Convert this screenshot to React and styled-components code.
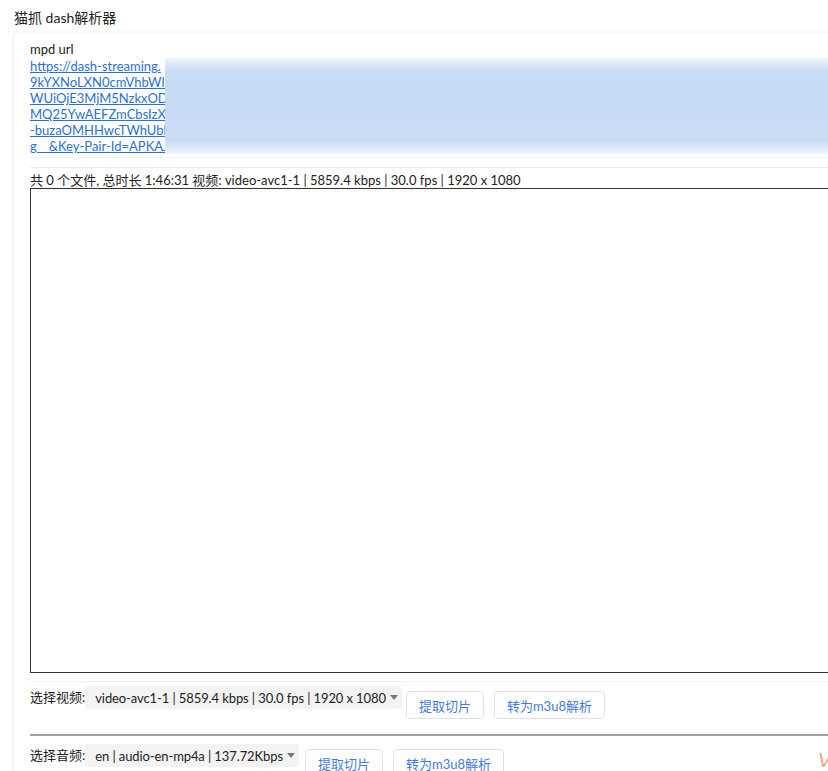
import React from "react";
import styled, { createGlobalStyle } from "styled-components";

const FONT = `"Lato", "Noto Sans CJK SC", sans-serif`;

const Global = createGlobalStyle`
  html, body { margin: 0; padding: 0; background: #fff; overflow: hidden; }
  body {
    font-family: ${FONT};
    font-size: 13px;
    color: #222;
  }
`;

const Page = styled.div`
  width: 900px;
  padding: 8px 0 0 14px;
`;

const Title = styled.div`
  font-size: 14px;
  line-height: 20px;
  color: #222;
  margin-bottom: 5px;
`;

const Card = styled.div`
  border-radius: 4px;
  box-shadow: 0 0 3px rgba(0, 0, 0, 0.14);
  padding: 8px 16px 0 16px;
  width: 826px;
`;

const Label = styled.div`
  line-height: 17px;
`;

const UrlBox = styled.div`
  display: flex;
  align-items: stretch;
  padding-bottom: 3px;
  border-bottom: 1px solid #f2f2f2;
`;

const Links = styled.div`
  width: 135px;
  overflow: hidden;
  flex: none;
`;

const Link = styled.a`
  display: block;
  color: #2a70d8;
  text-decoration: underline;
  line-height: 16px;
  white-space: nowrap;
`;

const Redact = styled.div`
  flex: 1;
  margin-right: -40px;
  background: linear-gradient(180deg, rgba(200,220,245,0.3) 0%, #c9dcf5 14%, #c7daf4 50%, #cadcf5 86%, rgba(200,220,245,0.3) 100%);
`;

const Sep = styled.div`
  height: 1px;
  background: ${(p) => p.$color || "#eeeeee"};
  margin: ${(p) => p.$m || "0"};
`;

const Status = styled.div`
  line-height: 16px;
  margin-top: 4px;
`;

const Output = styled.div`
  height: 483px;
  border: 1px solid #333;
  border-right: none;
  margin-right: -40px;
`;

const Row = styled.div`
  display: flex;
  align-items: flex-start;
  padding-top: ${(p) => p.$pt || "6px"};
`;

const RowLabel = styled.div`
  line-height: 23px;
`;

const Select = styled.div`
  display: flex;
  align-items: center;
  height: 23px;
  padding: 0 4px 0 10px;
  background: #f3f3f3;
  border-radius: 4px;
  color: #222;
  white-space: nowrap;
  letter-spacing: -0.1px;
`;

const Caret = styled.span`
  width: 0;
  height: 0;
  margin-left: 4px;
  border-left: 4.5px solid transparent;
  border-right: 4.5px solid transparent;
  border-top: 5px solid #777;
`;

const Button = styled.button`
  margin: 5px 0 0 ${(p) => p.$ml || "10px"};
  height: 28px;
  padding: 0 12px;
  background: #fff;
  border: 1px solid #e2e2e2;
  border-radius: 4px;
  color: #3f7bdc;
  font-family: ${FONT};
  font-size: 13px;
  white-space: nowrap;
`;

const Hr = styled.div`
  height: 2px;
  background: #a0a0a0;
  margin-top: 15px;
`;

const Mark = styled.div`
  margin: 5px 18px 0 auto;
  font-family: "DejaVu Sans", sans-serif;
  font-size: 20px;
  font-weight: 200;
  font-style: italic;
  color: #f6a48f;
  line-height: 22px;
  width: 20px;
`;

const urlLines = [
  "https://dash-streaming.",
  "9kYXNoLXN0cmVhbWlu",
  "WUiOjE3MjM5NzkxODY",
  "MQ25YwAEFZmCbsIzXV",
  "-buzaOMHHwcTWhUbIk",
  "g__&Key-Pair-Id=APKAJ",
];

export default function App() {
  return (
    <>
      <Global />
      <Page>
        <Title>猫抓 dash解析器</Title>
        <Card>
          <Label>mpd url</Label>
          <UrlBox>
            <Links>
              {urlLines.map((l, i) => (
                <Link key={i} href="#">{l}</Link>
              ))}
            </Links>
            <Redact />
          </UrlBox>
          <Sep $m="9px 0 0 0" />
          <Status>共 0 个文件, 总时长 1:46:31 视频: video-avc1-1 | 5859.4 kbps | 30.0 fps | 1920 x 1080</Status>
          <Output />
          <Sep $m="8px 0 0 0" $color="#f2f2f2" />
          <Row $pt="4px">
            <RowLabel>选择视频:</RowLabel>
            <Select>video-avc1-1 | 5859.4 kbps | 30.0 fps | 1920 x 1080<Caret /></Select>
            <Button $ml="4px">提取切片</Button>
            <Button>转为m3u8解析</Button>
          </Row>
          <Hr />
          <Row $pt="8px">
            <RowLabel>选择音频:</RowLabel>
            <Select>en | audio-en-mp4a | 137.72Kbps<Caret /></Select>
            <Button $ml="6px">提取切片</Button>
            <Button>转为m3u8解析</Button>
            <Mark>V</Mark>
          </Row>
        </Card>
      </Page>
    </>
  );
}
